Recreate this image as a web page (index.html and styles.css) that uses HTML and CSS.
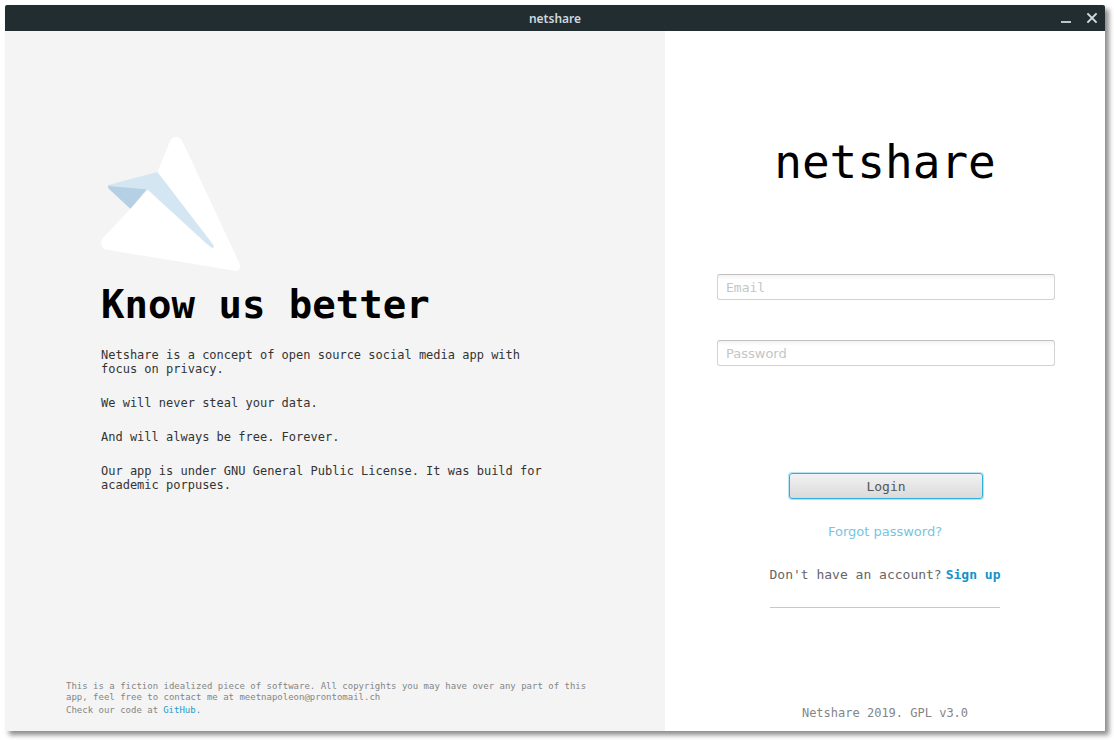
FILE: index.html
```html
<!DOCTYPE html>
<html lang="en">
<head>
<meta charset="utf-8">
<meta name="viewport" content="width=device-width, initial-scale=1">
<title>netshare</title>
<link rel="stylesheet" href="styles.css">
</head>
<body>
<div class="window">
  <header class="titlebar">
    <span class="titlebar-name">netshare</span>
    <div class="titlebar-controls">
      <button class="control" type="button" aria-label="Minimize">
        <svg width="12" height="12" viewBox="0 0 12 12"><path d="M1 10h10" stroke="#b9c6cb" stroke-width="2"/></svg>
      </button>
      <button class="control" type="button" aria-label="Close">
        <svg width="12" height="12" viewBox="0 0 12 12"><path d="M1.400 1.400l9.200 9.200M10.600 1.400l-9.200 9.200" stroke="#d0dce0" stroke-width="2"/></svg>
      </button>
    </div>
  </header>
  <main class="content">
    <section class="about">
      <div class="pitch">
        <svg class="logo" width="140" height="135" viewBox="0 0 140 135" aria-hidden="true">
          <path d="M29.500 72L8 52Q6.500 50 7 48L48 49.500Z" fill="#b5cfe5"/>
          <path d="M7 49Q7 48 9 47.500L56.500 35L80 48L114 108Q114.500 112 110.500 110.500L60 75L46.500 52.500L47.500 52.500Z" fill="#d4e6f1"/>
          <path d="M56.500 35L68.500 5.500Q70.500 0 75 0Q79.500 0 82 5.500L138.500 126.500Q140.500 133 135.500 134L7.500 113Q2 112.500 0.500 108Q-1 104.500 2.500 100.500L47 53L108 109Q111 112 112.500 110.500Q113.500 109 110.500 105.500Z" fill="#fff"/>
        </svg>
        <h1 class="headline">Know us better</h1>
        <p class="copy">Netshare is a concept of open source social media app with focus on privacy.</p>
        <p class="copy">We will never steal your data.</p>
        <p class="copy">And will always be free. Forever.</p>
        <p class="copy">Our app is under GNU General Public License. It was build for academic porpuses.</p>
      </div>
      <footer class="legal">
        <p class="legal-text">This is a fiction idealized piece of software. All copyrights you may have over any part of this app, feel free to contact me at meetnapoleon@prontomail.ch</p>
        <p class="legal-code"><span>Check our code at</span><a class="legal-link" href="#github">GitHub.</a></p>
      </footer>
    </section>
    <section class="access">
      <h2 class="brand">netshare</h2>
      <form class="login">
        <input class="field" type="email" placeholder="Email" aria-label="Email">
        <input class="field field-password" type="password" placeholder="Password" aria-label="Password">
        <button class="submit" type="submit">Login</button>
      </form>
      <a class="forgot" href="#forgot">Forgot password?</a>
      <p class="signup"><span>Don't have an account?</span><a class="signup-link" href="#signup">Sign up</a></p>
      <p class="license">Netshare 2019. GPL v3.0</p>
    </section>
  </main>
</div>
</body>
</html>
```

FILE: styles.css
```css
* {
  box-sizing: border-box;
}

body {
  margin: 0;
  padding: 5px 9px 9px 5px;
  height: 100vh;
  background: #fff;
  font-family: "DejaVu Sans Mono", monospace;
}

h1, h2, p {
  margin: 0;
}

a {
  text-decoration: none;
}

.window {
  display: flex;
  flex-direction: column;
  height: 100%;
  min-height: 700px;
  border-radius: 2px 2px 0 0;
  box-shadow: 4px 4px 5px rgba(0, 0, 0, 0.45);
}

.titlebar {
  display: grid;
  grid-template-columns: 1fr auto 1fr;
  align-items: center;
  height: 26px;
  padding: 0 7px;
  border-radius: 2px 2px 0 0;
  background: #222d32;
}

.titlebar-name {
  grid-column: 2;
  color: #cfd8dc;
  font: 600 12px "Noto Sans", sans-serif;
}

.titlebar-controls {
  display: flex;
  justify-content: flex-end;
  gap: 14px;
}

.control {
  display: flex;
  padding: 0;
  border: 0;
  background: none;
}

.content {
  display: grid;
  grid-template-columns: 3fr 2fr;
  flex: 1;
}

.about {
  display: flex;
  flex-direction: column;
  justify-content: space-between;
  padding: 106px 60px 15px;
  background: #f4f4f4;
}

.pitch {
  max-width: 490px;
  padding: 0 0 0 36px;
}

.logo {
  display: block;
}

.headline {
  margin: 10px 0 20px;
  font-size: 39px;
  line-height: 46px;
}

.copy {
  margin-bottom: 20px;
  color: #333;
  font-size: 12px;
  line-height: 14px;
}

.legal {
  padding: 0 0 0 1px;
  color: #858585;
  font-size: 9px;
  line-height: 11px;
}

.legal-code {
  display: flex;
  gap: 5px;
  padding-top: 2px;
}

.legal-link {
  color: #1e9bcf;
}

.access {
  display: flex;
  flex-direction: column;
  align-items: center;
  padding: 104px 50px 10px;
  background: #fff;
}

.brand {
  font-size: 46px;
  font-weight: normal;
  line-height: 54px;
}

.login {
  display: flex;
  flex-direction: column;
  align-items: center;
  width: 100%;
  margin-top: 85px;
  padding-left: 2px;
}

.field {
  width: 100%;
  height: 26px;
  margin-bottom: 40px;
  padding: 0 8px;
  border: 1px solid #d2d2d2;
  border-top-color: #c0c0c0;
  border-radius: 3px;
  background: linear-gradient(#f3f3f3, #fff 5px);
  font: 13px "DejaVu Sans Mono", monospace;
}

.field-password {
  margin-bottom: 107px;
  font-family: "DejaVu Sans", sans-serif;
}

.field::placeholder {
  color: #c5c5c5;
}

.submit {
  width: 194px;
  height: 26px;
  padding: 0;
  border: 1px solid #2fb0dc;
  border-radius: 3px;
  background: linear-gradient(#f2f2f2, #dadada);
  box-shadow: 0 0 0 1px #b8e4f3;
  color: #555;
  font: 13px "DejaVu Sans Mono", monospace;
}

.forgot {
  margin-top: 25px;
  color: #76c5e0;
  font: 13px/16px "DejaVu Sans", sans-serif;
}

.signup {
  display: flex;
  gap: 4px;
  margin-top: 27px;
  padding-bottom: 24px;
  border-bottom: 1px solid #c8c8c8;
  color: #666;
  font-size: 13px;
  line-height: 16px;
}

.signup-link {
  color: #0f93c8;
  font-weight: bold;
}

.license {
  margin-top: auto;
  color: #858585;
  font-size: 12px;
  line-height: 16px;
}
```
